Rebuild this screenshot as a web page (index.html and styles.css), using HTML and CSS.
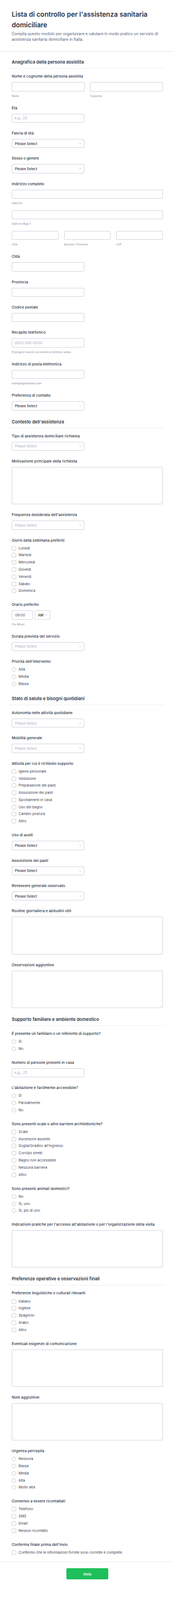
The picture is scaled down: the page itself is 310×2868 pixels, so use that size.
FILE: index.html
```html
<!DOCTYPE html>
<html lang="it">
<head>
<meta charset="utf-8">
<title>Lista di controllo per l'assistenza sanitaria domiciliare</title>
<link rel="stylesheet" href="styles.css">
</head>
<body>
<header class="form-header">
  <h1 class="title">Lista di controllo per l'assistenza sanitaria domiciliare</h1>
  <p class="desc">Compila questo modulo per organizzare e valutare in modo pratico un servizio di assistenza sanitaria domiciliare in Italia.</p>
</header>

<main class="form">
  <h2 class="section-head">Anagrafica della persona assistita</h2>

  <div class="field">
    <label class="label">Nome e cognome della persona assistita</label>
    <div class="row2">
      <div><input class="input" type="text"><div class="sub">Nome</div></div>
      <div><input class="input" type="text"><div class="sub">Cognome</div></div>
    </div>
  </div>

  <div class="field">
    <label class="label">Età</label>
    <input class="input half" type="text" placeholder="e.g., 23">
  </div>

  <div class="field">
    <label class="label">Fascia di età</label>
    <div class="select half"><span>Please Select</span><svg class="chev" viewBox="0 0 6 4"><path d="M1 1l2 2 2-2"/></svg></div>
  </div>

  <div class="field">
    <label class="label">Sesso o genere</label>
    <div class="select half"><span>Please Select</span><svg class="chev" viewBox="0 0 6 4"><path d="M1 1l2 2 2-2"/></svg></div>
  </div>

  <div class="field">
    <label class="label">Indirizzo completo</label>
    <div class="addr">
      <div><input class="input" type="text"><div class="sub">Indirizzo</div></div>
      <div><input class="input" type="text"><div class="sub">Indirizzo Riga 2</div></div>
      <div class="row3">
        <div><input class="input" type="text"><div class="sub">Città</div></div>
        <div><input class="input" type="text"><div class="sub">Nazione / Provincia</div></div>
        <div><input class="input" type="text"><div class="sub">CAP</div></div>
      </div>
    </div>
  </div>

  <div class="field">
    <label class="label">Città</label>
    <input class="input half" type="text">
  </div>

  <div class="field">
    <label class="label">Provincia</label>
    <input class="input half" type="text">
  </div>

  <div class="field">
    <label class="label">Codice postale</label>
    <input class="input half" type="text">
  </div>

  <div class="field">
    <label class="label">Recapito telefonico</label>
    <input class="input half" type="text" placeholder="(000) 000-0000">
    <div class="sub">Si prega di inserire un numero di telefono valido.</div>
  </div>

  <div class="field">
    <label class="label">Indirizzo di posta elettronica</label>
    <input class="input half" type="text">
    <div class="sub">esempio@esempio.com</div>
  </div>

  <div class="field">
    <label class="label">Preferenza di contatto</label>
    <div class="select half"><span>Please Select</span><svg class="chev" viewBox="0 0 6 4"><path d="M1 1l2 2 2-2"/></svg></div>
  </div>

  <h2 class="section-head">Contesto dell'assistenza</h2>

  <div class="field">
    <label class="label">Tipo di assistenza domiciliare richiesta</label>
    <div class="select half muted"><span>Please Select</span><svg class="chev" viewBox="0 0 6 4"><path d="M1 1l2 2 2-2"/></svg></div>
  </div>

  <div class="field">
    <label class="label">Motivazione principale della richiesta</label>
    <div class="ta"><textarea></textarea><svg class="grip" viewBox="0 0 4 4"><path d="M0.5 3.5l3-3M2.2 3.5l1.3-1.3"/></svg></div>
  </div>

  <div class="field">
    <label class="label">Frequenza desiderata dell'assistenza</label>
    <div class="select half muted"><span>Please Select</span><svg class="chev" viewBox="0 0 6 4"><path d="M1 1l2 2 2-2"/></svg></div>
  </div>

  <div class="field">
    <label class="label opts-label">Giorni della settimana preferiti</label>
    <div class="options">
      <label class="opt"><input type="checkbox" class="cb">Lunedì</label>
      <label class="opt"><input type="checkbox" class="cb">Martedì</label>
      <label class="opt"><input type="checkbox" class="cb">Mercoledì</label>
      <label class="opt"><input type="checkbox" class="cb">Giovedì</label>
      <label class="opt"><input type="checkbox" class="cb">Venerdì</label>
      <label class="opt"><input type="checkbox" class="cb">Sabato</label>
      <label class="opt"><input type="checkbox" class="cb">Domenica</label>
    </div>
  </div>

  <div class="field">
    <label class="label">Orario preferito</label>
    <div class="time-row">
      <input class="input time" type="text" value="09:00">
      <div class="select ampm"><span>AM</span><svg class="chev" viewBox="0 0 6 4"><path d="M1 1l2 2 2-2"/></svg></div>
    </div>
    <div class="sub">Ora Minuti</div>
  </div>

  <div class="field">
    <label class="label">Durata prevista del servizio</label>
    <div class="select half muted"><span>Please Select</span><svg class="chev" viewBox="0 0 6 4"><path d="M1 1l2 2 2-2"/></svg></div>
  </div>

  <div class="field">
    <label class="label opts-label">Priorità dell'intervento</label>
    <div class="options">
      <label class="opt"><input type="radio" name="prio" class="rb">Alta</label>
      <label class="opt"><input type="radio" name="prio" class="rb">Media</label>
      <label class="opt"><input type="radio" name="prio" class="rb">Bassa</label>
    </div>
  </div>

  <h2 class="section-head">Stato di salute e bisogni quotidiani</h2>

  <div class="field">
    <label class="label">Autonomia nelle attività quotidiane</label>
    <div class="select half muted"><span>Please Select</span><svg class="chev" viewBox="0 0 6 4"><path d="M1 1l2 2 2-2"/></svg></div>
  </div>

  <div class="field">
    <label class="label">Mobilità generale</label>
    <div class="select half muted"><span>Please Select</span><svg class="chev" viewBox="0 0 6 4"><path d="M1 1l2 2 2-2"/></svg></div>
  </div>

  <div class="field">
    <label class="label opts-label">Attività per cui è richiesto supporto</label>
    <div class="options">
      <label class="opt"><input type="checkbox" class="cb">Igiene personale</label>
      <label class="opt"><input type="checkbox" class="cb">Vestizione</label>
      <label class="opt"><input type="checkbox" class="cb">Preparazione dei pasti</label>
      <label class="opt"><input type="checkbox" class="cb">Assunzione dei pasti</label>
      <label class="opt"><input type="checkbox" class="cb">Spostamenti in casa</label>
      <label class="opt"><input type="checkbox" class="cb">Uso del bagno</label>
      <label class="opt"><input type="checkbox" class="cb">Cambio postura</label>
      <label class="opt"><input type="checkbox" class="cb">Altro</label>
    </div>
  </div>

  <div class="field">
    <label class="label">Uso di ausili</label>
    <div class="select half"><span>Please Select</span><svg class="chev" viewBox="0 0 6 4"><path d="M1 1l2 2 2-2"/></svg></div>
  </div>

  <div class="field">
    <label class="label">Assunzione dei pasti</label>
    <div class="select half"><span>Please Select</span><svg class="chev" viewBox="0 0 6 4"><path d="M1 1l2 2 2-2"/></svg></div>
  </div>

  <div class="field">
    <label class="label">Benessere generale osservato</label>
    <div class="select half"><span>Please Select</span><svg class="chev" viewBox="0 0 6 4"><path d="M1 1l2 2 2-2"/></svg></div>
  </div>

  <div class="field">
    <label class="label">Routine giornaliera e abitudini utili</label>
    <div class="ta"><textarea></textarea><svg class="grip" viewBox="0 0 4 4"><path d="M0.5 3.5l3-3M2.2 3.5l1.3-1.3"/></svg></div>
  </div>

  <div class="field">
    <label class="label">Osservazioni aggiuntive</label>
    <div class="ta"><textarea></textarea><svg class="grip" viewBox="0 0 4 4"><path d="M0.5 3.5l3-3M2.2 3.5l1.3-1.3"/></svg></div>
  </div>

  <h2 class="section-head">Supporto familiare e ambiente domestico</h2>

  <div class="field">
    <label class="label opts-label">È presente un familiare o un referente di supporto?</label>
    <div class="options">
      <label class="opt"><input type="radio" name="fam" class="rb">Sì</label>
      <label class="opt"><input type="radio" name="fam" class="rb">No</label>
    </div>
  </div>

  <div class="field">
    <label class="label">Numero di persone presenti in casa</label>
    <input class="input half" type="text" placeholder="e.g., 23">
  </div>

  <div class="field">
    <label class="label opts-label">L'abitazione è facilmente accessibile?</label>
    <div class="options">
      <label class="opt"><input type="radio" name="acc" class="rb">Sì</label>
      <label class="opt"><input type="radio" name="acc" class="rb">Parzialmente</label>
      <label class="opt"><input type="radio" name="acc" class="rb">No</label>
    </div>
  </div>

  <div class="field">
    <label class="label opts-label">Sono presenti scale o altre barriere architettoniche?</label>
    <div class="options">
      <label class="opt"><input type="checkbox" class="cb">Scale</label>
      <label class="opt"><input type="checkbox" class="cb">Ascensore assente</label>
      <label class="opt"><input type="checkbox" class="cb">Soglia/Gradino all'ingresso</label>
      <label class="opt"><input type="checkbox" class="cb">Corridoi stretti</label>
      <label class="opt"><input type="checkbox" class="cb">Bagno non accessibile</label>
      <label class="opt"><input type="checkbox" class="cb">Nessuna barriera</label>
      <label class="opt"><input type="checkbox" class="cb">Altro</label>
    </div>
  </div>

  <div class="field">
    <label class="label opts-label">Sono presenti animali domestici?</label>
    <div class="options">
      <label class="opt"><input type="radio" name="pet" class="rb">No</label>
      <label class="opt"><input type="radio" name="pet" class="rb">Sì, uno</label>
      <label class="opt"><input type="radio" name="pet" class="rb">Sì, più di uno</label>
    </div>
  </div>

  <div class="field">
    <label class="label">Indicazioni pratiche per l'accesso all'abitazione o per l'organizzazione della visita</label>
    <div class="ta"><textarea></textarea><svg class="grip" viewBox="0 0 4 4"><path d="M0.5 3.5l3-3M2.2 3.5l1.3-1.3"/></svg></div>
  </div>

  <h2 class="section-head">Preferenze operative e osservazioni finali</h2>

  <div class="field">
    <label class="label opts-label">Preferenze linguistiche o culturali rilevanti</label>
    <div class="options">
      <label class="opt"><input type="checkbox" class="cb">Italiano</label>
      <label class="opt"><input type="checkbox" class="cb">Inglese</label>
      <label class="opt"><input type="checkbox" class="cb">Spagnolo</label>
      <label class="opt"><input type="checkbox" class="cb">Arabo</label>
      <label class="opt"><input type="checkbox" class="cb">Altro</label>
    </div>
  </div>

  <div class="field">
    <label class="label">Eventuali esigenze di comunicazione</label>
    <div class="ta"><textarea></textarea><svg class="grip" viewBox="0 0 4 4"><path d="M0.5 3.5l3-3M2.2 3.5l1.3-1.3"/></svg></div>
  </div>

  <div class="field">
    <label class="label">Note aggiuntive</label>
    <div class="ta"><textarea></textarea><svg class="grip" viewBox="0 0 4 4"><path d="M0.5 3.5l3-3M2.2 3.5l1.3-1.3"/></svg></div>
  </div>

  <div class="field">
    <label class="label opts-label">Urgenza percepita</label>
    <div class="options">
      <label class="opt"><input type="radio" name="urg" class="rb">Nessuna</label>
      <label class="opt"><input type="radio" name="urg" class="rb">Bassa</label>
      <label class="opt"><input type="radio" name="urg" class="rb">Media</label>
      <label class="opt"><input type="radio" name="urg" class="rb">Alta</label>
      <label class="opt"><input type="radio" name="urg" class="rb">Molto alta</label>
    </div>
  </div>

  <div class="field">
    <label class="label opts-label">Consenso a essere ricontattati</label>
    <div class="options">
      <label class="opt"><input type="checkbox" class="cb">Telefono</label>
      <label class="opt"><input type="checkbox" class="cb">SMS</label>
      <label class="opt"><input type="checkbox" class="cb">Email</label>
      <label class="opt"><input type="checkbox" class="cb">Nessun ricontatto</label>
    </div>
  </div>

  <div class="field last">
    <label class="label opts-label">Conferma finale prima dell'invio</label>
    <div class="options">
      <label class="opt"><input type="checkbox" class="cb">Confermo che le informazioni fornite sono corrette e complete</label>
    </div>
  </div>
</main>

<footer class="form-footer">
  <button class="submit" type="button">Invia</button>
</footer>
</body>
</html>
```

FILE: styles.css
```css
* {
  box-sizing: border-box;
  margin: 0;
  padding: 0;
}

html, body {
  background: #ffffff;
}

body {
  margin: 0;
  width: 310px;
  font-family: Inter, "Noto Sans", "Liberation Sans", sans-serif;
  color: #2c3345;
}

/* Header */
.form-header {
  padding: 17px 18px 16px 21px;
  border-bottom: 1px solid #e6e8ee;
}

.title {
  font-size: 12px;
  font-weight: 600;
  line-height: 18.5px;
  color: #2c3345;
}

.desc {
  margin-top: 2.4px;
  font-size: 6.9px;
  line-height: 9.7px;
  color: #57647e;
}

/* Form body */
.form {
  padding: 7.5px 18px 0 21px;
}

.section-head {
  margin: 4.5px -3px 9px -6px;
  padding: 0 6px 5px;
  border-bottom: 1px solid #f0f1f4;
  font-size: 7.9px;
  line-height: 12px;
  font-weight: 600;
  color: #2c3345;
}

.form > .section-head:first-child {
  margin-top: 5px;
}

.field {
  margin-bottom: 14px;
}

.field.last {
  margin-bottom: 10px;
}

.label {
  display: block;
  font-size: 6.6px;
  line-height: 10px;
  font-weight: 500;
  margin-bottom: 5px;
  color: #2c3345;
}

.label.opts-label {
  margin-bottom: 4.7px;
}

.input,
.select,
textarea {
  display: block;
  width: 100%;
  height: 16.4px;
  border: 1px solid #d6d9e2;
  border-radius: 2px;
  background: #ffffff;
  font-family: inherit;
  font-size: 6.4px;
  color: #2c3345;
  padding: 0 4px;
  outline: none;
}

.input::placeholder {
  color: #a7adbb;
}

.half {
  width: 130px;
}

.select {
  display: flex;
  align-items: center;
  justify-content: space-between;
  padding: 0 4.7px 0 4.7px;
  font-size: 6.2px;
  font-weight: 500;
  color: #2c3345;
}

.select.muted {
  color: #a9b0be;
  font-weight: 400;
}

.chev {
  width: 3.6px;
  height: 2.6px;
  fill: none;
  stroke: #6b7280;
  stroke-width: 0.9;
  stroke-linecap: round;
  stroke-linejoin: round;
}

.sub {
  margin-top: 5px;
  font-size: 4.7px;
  line-height: 6px;
  color: #8a91a1;
}

.row2 {
  display: grid;
  grid-template-columns: 1fr 1fr;
  column-gap: 9.6px;
}

.addr {
  display: flex;
  flex-direction: column;
  gap: 9.6px;
}

.row3 {
  display: grid;
  grid-template-columns: 1fr 1fr 1fr;
  column-gap: 9.6px;
}

/* Time */
.time-row {
  display: flex;
  gap: 3.3px;
}

.time {
  width: 38px;
  color: #4a5163;
  padding-left: 5px;
}

.ampm {
  width: 28px;
}

/* Textarea */
.ta {
  position: relative;
  height: 67.2px;
}

.ta textarea {
  height: 100%;
  resize: none;
}

.grip {
  position: absolute;
  right: 2px;
  bottom: 2px;
  width: 3px;
  height: 3px;
  stroke: #b9bec9;
  stroke-width: 0.5;
  fill: none;
}

/* Options */
.options {
  display: flex;
  flex-direction: column;
  gap: 4px;
  padding-bottom: 1.6px;
}

.opt {
  display: flex;
  align-items: center;
  gap: 4.3px;
  height: 8.8px;
  font-size: 6.3px;
  color: #3a4152;
}

.cb,
.rb {
  appearance: none;
  -webkit-appearance: none;
  flex-shrink: 0;
  width: 8px;
  height: 8px;
  margin: 0;
  border: 1px solid #cdd1db;
  background: #ffffff;
}

.cb {
  border-radius: 1.5px;
}

.rb {
  border-radius: 50%;
}

/* Footer */
.form-footer {
  border-top: 1px solid #eef0f3;
  padding: 11.5px 18px 16.7px 21px;
  display: flex;
  justify-content: center;
}

.submit {
  width: 74.4px;
  height: 20px;
  border: none;
  border-radius: 2px;
  background: #1fbf5c;
  color: #ffffff;
  font-family: inherit;
  font-size: 6.2px;
  font-weight: 600;
}
```
